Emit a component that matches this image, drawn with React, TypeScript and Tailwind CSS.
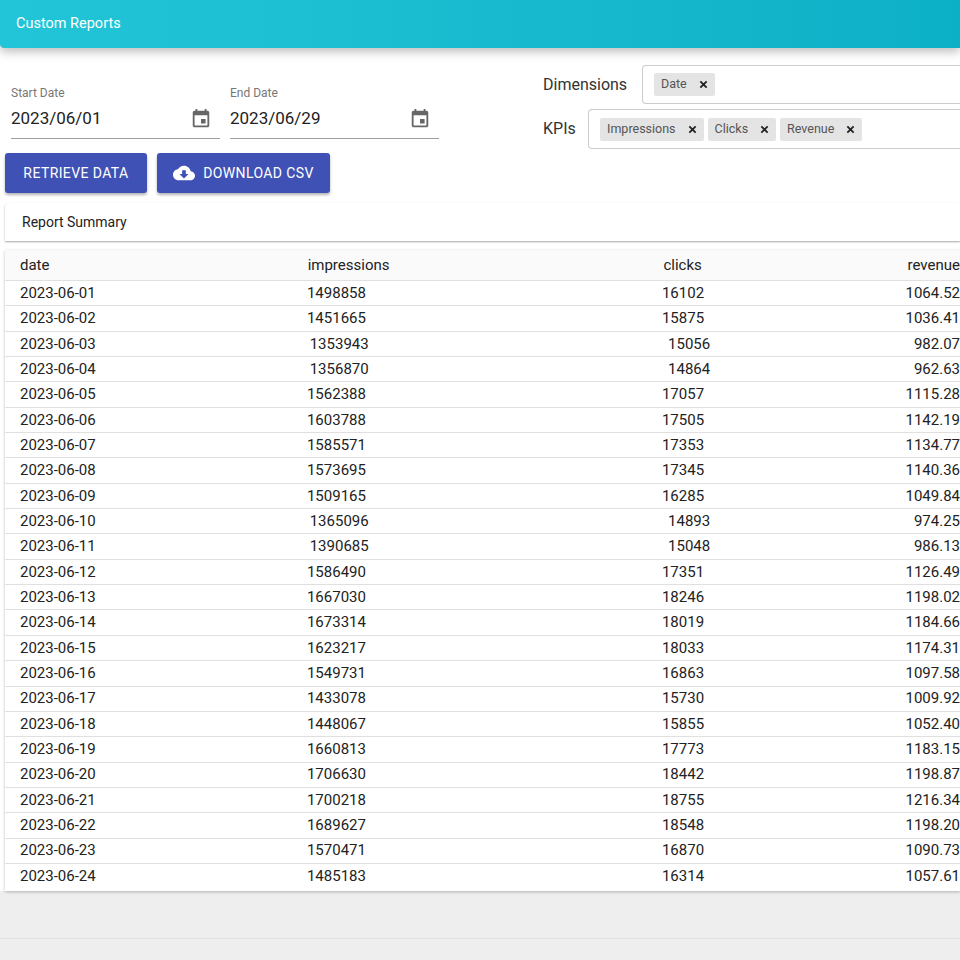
import React from "react";

const rows: [string, number, number, string][] = [
["2023-06-01",1498858,16102,"1064.52"],["2023-06-02",1451665,15875,"1036.41"],["2023-06-03",1353943,15056,"982.07"],["2023-06-04",1356870,14864,"962.63"],["2023-06-05",1562388,17057,"1115.28"],["2023-06-06",1603788,17505,"1142.19"],["2023-06-07",1585571,17353,"1134.77"],["2023-06-08",1573695,17345,"1140.36"],["2023-06-09",1509165,16285,"1049.84"],["2023-06-10",1365096,14893,"974.25"],["2023-06-11",1390685,15048,"986.13"],["2023-06-12",1586490,17351,"1126.49"],["2023-06-13",1667030,18246,"1198.02"],["2023-06-14",1673314,18019,"1184.66"],["2023-06-15",1623217,18033,"1174.31"],["2023-06-16",1549731,16863,"1097.58"],["2023-06-17",1433078,15730,"1009.92"],["2023-06-18",1448067,15855,"1052.40"],["2023-06-19",1660813,17773,"1183.15"],["2023-06-20",1706630,18442,"1198.87"],["2023-06-21",1700218,18755,"1216.34"],["2023-06-22",1689627,18548,"1198.20"],["2023-06-23",1570471,16870,"1090.73"],["2023-06-24",1485183,16314,"1057.61"],
];

const Cal = () => (
  <svg width="22" height="22" viewBox="0 0 24 24" fill="#666"><path d="M17 12h-5v5h5v-5zM16 1v2H8V1H6v2H5c-1.11 0-1.99.9-1.99 2L3 19c0 1.1.89 2 2 2h14c1.1 0 2-.9 2-2V5c0-1.1-.9-2-2-2h-1V1h-2zm3 18H5V8h14v11z"/></svg>
);
const X = () => (
  <svg width="9" height="9" viewBox="0 0 10 10" stroke="#222" strokeWidth="2"><path d="M1.5 1.5l7 7M8.5 1.5l-7 7"/></svg>
);
const Chip = ({ t }: { t: string }) => (
  <span className="flex items-center gap-[12px] bg-[#e4e4e4] rounded-[2px] h-[23px] px-[7px] text-[12.5px] text-[#555]">{t}<X /></span>
);

export default function App() {
  return (
    <div className="w-[960px] h-[960px] overflow-hidden bg-[#eeeeee] flex flex-col" style={{ fontFamily: "Roboto, 'Liberation Sans', sans-serif" }}>
      <div className="bg-white flex flex-col h-[891px] shrink-0">
        <div className="h-[48px] shrink-0 bg-gradient-to-r from-[#22c5d8] to-[#0cb0c6] rounded-bl-[4px] shadow-[0_4px_10px_rgba(0,0,0,0.25)] flex items-center px-[16px] text-white text-[14.5px] z-10">Custom Reports</div>
        <div className="flex mt-[17px]">
          <div className="flex flex-col pl-[5px] w-[543px]">
            <div className="flex gap-[10px] pl-[6px] pt-[22px]">
              {[["Start Date","2023/06/01"],["End Date","2023/06/29"]].map(([l,v])=>(
                <div key={l} className="w-[209px] border-b border-[#9e9e9e] h-[52px] flex flex-col">
                  <span className="text-[12px] text-[#777] leading-none">{l}</span>
                  <div className="flex items-center justify-between mt-[7px] pr-[8px]">
                    <span className="text-[17px] text-[#222]">{v}</span><Cal />
                  </div>
                </div>
              ))}
            </div>
            <div className="flex gap-[10px] mt-[14px]">
              <button className="h-[40px] w-[142px] bg-[#3f51b5] text-white rounded-[3px] text-[14px] tracking-[0.4px] shadow-[0_2px_3px_rgba(0,0,0,0.3)]">RETRIEVE DATA</button>
              <button className="h-[40px] w-[173px] bg-[#3f51b5] text-white rounded-[3px] text-[14px] tracking-[0.4px] shadow-[0_2px_3px_rgba(0,0,0,0.3)] flex items-center justify-center gap-[8px]">
                <svg width="22" height="22" viewBox="0 0 24 24" fill="white"><path d="M19.35 10.04C18.67 6.59 15.64 4 12 4 9.11 4 6.6 5.64 5.35 8.04 2.34 8.36 0 10.91 0 14c0 3.31 2.69 6 6 6h13c2.76 0 5-2.24 5-5 0-2.64-2.05-4.78-4.65-4.96zM17 13l-5 5-5-5h3V9h4v4h3z"/></svg>
                DOWNLOAD CSV
              </button>
            </div>
          </div>
          <div className="flex flex-col gap-[5px] flex-1">
            <div className="flex items-center h-[39px]">
              <span className="text-[16px] text-[#333] w-[99px]">Dimensions</span>
              <div className="flex-1 h-[39px] border border-[#ccc] border-r-0 rounded-l-[4px] flex items-center px-[11px]"><Chip t="Date" /></div>
            </div>
            <div className="flex items-center h-[40px]">
              <span className="text-[16px] text-[#333] w-[45px]">KPIs</span>
              <div className="flex-1 h-[40px] border border-[#ccc] border-r-0 rounded-l-[4px] flex items-center gap-[4px] px-[11px]"><Chip t="Impressions" /><Chip t="Clicks" /><Chip t="Revenue" /></div>
            </div>
          </div>
        </div>
        <div className="ml-[5px] mt-[10px] h-[38px] shrink-0 shadow-[0_1px_2px_rgba(0,0,0,0.35)] rounded-tl-[4px] flex items-center px-[17px] text-[14px] text-[#222]">Report Summary</div>
        <div className="ml-[5px] mt-[9px] shadow-[0_1px_3px_rgba(0,0,0,0.25)] flex-1 text-[15px] text-[#222]">
          <div className="flex h-[31px] items-center bg-[#fafafa] border-b border-[#e0e0e0]">
            <span className="w-[306px] pl-[15px]">date</span><span className="w-[360px]">impressions</span><span className="w-[247px]">clicks</span><span>revenue</span>
          </div>
          {rows.map(r => (
            <div key={r[0]} className="flex h-[25.35px] items-center border-b border-[#e0e0e0] last:border-b-0">
              <span className="w-[306px] pl-[15px]">{r[0]}</span><span className="w-[360px]">{r[1]}</span><span className="w-[247px]">{r[2]}</span><span>{r[3]}</span>
            </div>
          ))}
        </div>
      </div>
      <div className="mt-[47px] border-t border-[#e2e2e2]" />
    </div>
  );
}
